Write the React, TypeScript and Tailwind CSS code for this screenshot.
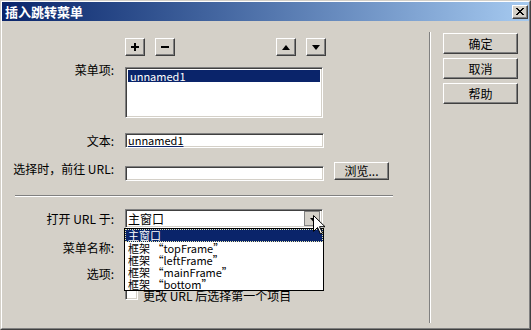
const raised =
  "border border-t-white border-l-white border-r-[#404040] border-b-[#404040] shadow-[inset_-1px_-1px_0_#808080] bg-[#d4d0c8]";
const sunken =
  "border border-t-[#808080] border-l-[#808080] border-r-white border-b-white shadow-[inset_1px_1px_0_#404040,inset_-1px_-1px_0_#d4d0c8] bg-white";

function Label({ children, className = "" }: { children: React.ReactNode; className?: string }) {
  return (
    <div className={`w-[113px] shrink-0 pr-[1px] text-right leading-[14px] whitespace-nowrap ${className}`}>
      {children}
    </div>
  );
}

function IconBtn({ children, className = "" }: { children: React.ReactNode; className?: string }) {
  return (
    <div className={`flex h-[18px] w-[20px] items-center justify-center ${raised} ${className}`}>
      {children}
    </div>
  );
}

function DlgBtn({ label }: { label: string }) {
  return (
    <div className={`flex h-[21px] w-[75px] items-center justify-center leading-none ${raised}`}>
      {label}
    </div>
  );
}

const frames = ["主窗口", "框架 “topFrame”", "框架 “leftFrame”", "框架 “mainFrame”", "框架 “bottom”"];

export default function App() {
  return (
    <div
      className="relative h-[330px] w-[531px] border border-t-[#d4d0c8] border-l-[#d4d0c8] border-r-[#404040] border-b-[#404040] bg-[#d4d0c8] text-[12px] text-black"
      style={{ fontFamily: '"Noto Sans CJK SC", "Liberation Sans", sans-serif' }}
    >
      <div className="flex h-full flex-col border border-t-white border-l-white border-r-[#808080] border-b-[#808080]">
        {/* title bar */}
        <div className="flex h-[19px] shrink-0 items-center justify-between bg-linear-to-r from-[#0a246a] to-[#a6caf0] pr-[1px] pl-[3px]">
          <span className="text-[13px] leading-none font-bold text-white">插入跳转菜单</span>
          <div className={`flex h-[14px] w-[16px] items-center justify-center ${raised}`}>
            <svg width="8" height="7" viewBox="0 0 8 7">
              <path d="M0 0h2v1h1v1h2v-1h1v-1h2v1h-1v1h-1v1h-1v1h1v1h1v1h1v1h-2v-1h-1v-1h-2v1h-1v1h-2v-1h1v-1h1v-1h1v-1h-1v-1h-1v-1h-1z" fill="#000" />
            </svg>
          </div>
        </div>

        {/* body */}
        <div className="flex flex-1">
          {/* left panel */}
          <div className="flex w-[427px] flex-col pt-[17px]">
            <div className="flex h-[18px]">
              <div className="w-[123px] shrink-0" />
              <div className="flex gap-[10px]">
                <IconBtn>
                  <svg width="8" height="8" viewBox="0 0 8 8">
                    <path d="M3 0h2v3h3v2h-3v3h-2v-3h-3v-2h3z" fill="#000" />
                  </svg>
                </IconBtn>
                <IconBtn>
                  <svg width="8" height="2" viewBox="0 0 8 2">
                    <rect width="8" height="2" fill="#000" />
                  </svg>
                </IconBtn>
              </div>
              <div className="ml-[101px] flex gap-[10px]">
                <IconBtn>
                  <svg width="8" height="5" viewBox="0 0 8 5">
                    <path d="M4 0l4 5h-8z" fill="#000" />
                  </svg>
                </IconBtn>
                <IconBtn>
                  <svg width="8" height="5" viewBox="0 0 8 5">
                    <path d="M0 0h8l-4 5z" fill="#000" />
                  </svg>
                </IconBtn>
              </div>
            </div>

            <div className="mt-[11px] flex items-start">
              <Label className="-mt-[4px]">菜单项:</Label>
              <div className={`ml-[10px] h-[51px] w-[198px] p-[2px] ${sunken}`}>
                <div className="h-[12px] bg-[#0a246a] pl-[2px] text-[11px] leading-[12px] text-white">unnamed1</div>
              </div>
            </div>

            <div className="mt-[15px] flex items-center">
              <Label>文本:</Label>
              <div className={`ml-[10px] h-[15px] w-[199px] px-[2px] text-[11px] leading-[12px] ${sunken}`}>
                <span className="underline decoration-[#0a246a]">unnamed1</span>
              </div>
            </div>

            <div className="mt-[14px] flex h-[19px] items-start">
              <Label>选择时，前往 URL:</Label>
              <div className={`mt-[4px] ml-[10px] h-[15px] w-[199px] ${sunken}`} />
              <div className={`ml-[10px] flex h-[18px] w-[55px] items-center justify-center leading-none ${raised}`}>
                浏览...
              </div>
            </div>

            <div className="mt-[14px] ml-[13px] h-[2px] w-[378px] border-t border-b border-t-[#808080] border-b-white" />

            <div className="mt-[12px] flex h-[19px] items-center">
              <Label>打开 URL 于:</Label>
              <div className="relative ml-[10px]">
                <div className={`flex h-[19px] w-[198px] items-center justify-between pr-[2px] pl-[2px] ${sunken}`}>
                  <span className="leading-none">主窗口</span>
                  <div className="flex h-[15px] w-[16px] items-center justify-center border border-[#808080] bg-[#d4d0c8] pt-[2px] pl-[2px]">
                    <svg width="7" height="4" viewBox="0 0 7 4">
                      <path d="M0 0h7l-3.5 4z" fill="#000" />
                    </svg>
                  </div>
                </div>
                <div className="absolute top-[19px] -left-[1px] z-10 flex h-[63px] w-[200px] flex-col border border-black bg-white text-[11px]">
                  {frames.map((f, i) =>
                    i === 0 ? (
                      <div
                        key={f}
                        className="h-[13px] border border-dotted border-[#e8e8b0] bg-[#0a246a] pl-[2px] leading-[11px] text-white"
                      >
                        {f}
                      </div>
                    ) : (
                      <div key={f} className="h-[12px] pl-[3px] leading-[12px] whitespace-nowrap">
                        {f}
                      </div>
                    )
                  )}
                </div>
              </div>
            </div>

            <div className="mt-[13px] flex h-[14px] items-center">
              <Label>菜单名称:</Label>
            </div>

            <div className="mt-[12px] flex h-[14px] items-center">
              <Label>选项:</Label>
            </div>

            <div className="mt-[6px] flex h-[13px] items-center">
              <div className="w-[123px] shrink-0" />
              <div className={`h-[13px] w-[13px] ${sunken}`} />
              <span className="mt-[5px] ml-[5px] leading-none whitespace-nowrap">更改 URL 后选择第一个项目</span>
            </div>
          </div>

          {/* right column */}
          <div className="flex flex-1 pt-[11px] pb-[5px]">
            <div className="w-[2px] border-r border-l border-l-[#808080] border-r-white" />
            <div className="ml-[12px] flex flex-col gap-[4px] pt-[1px]">
              <DlgBtn label="确定" />
              <DlgBtn label="取消" />
              <DlgBtn label="帮助" />
            </div>
          </div>
        </div>
      </div>

      {/* mouse cursor */}
      <svg className="absolute top-[214px] left-[312px] z-20" width="12" height="20" viewBox="0 0 12 20">
        <path d="M0.5 0.5v16l4-4 3 6.5 2-1-3-6.3h5.5z" fill="#fff" stroke="#000" strokeWidth="1" />
      </svg>
    </div>
  );
}
